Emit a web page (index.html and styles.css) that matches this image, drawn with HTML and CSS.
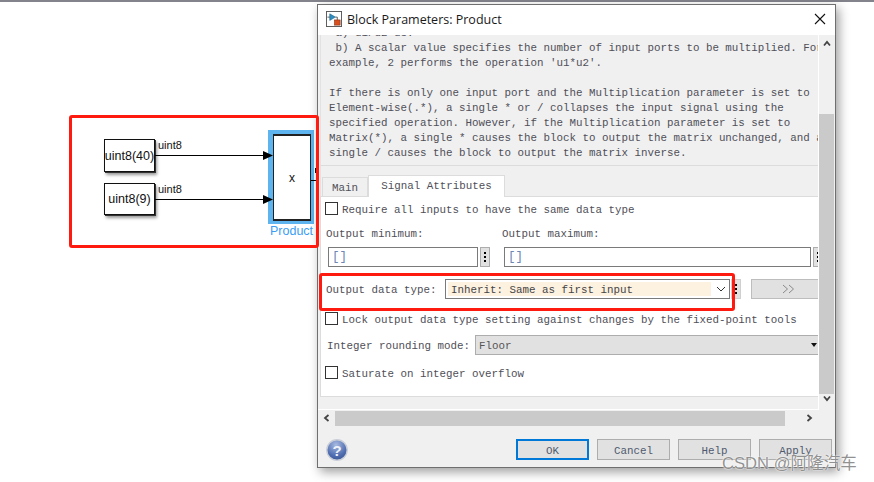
FILE: index.html
```html
<!DOCTYPE html>
<html lang="en">
<head>
<meta charset="utf-8">
<title>Block Parameters: Product</title>
<link rel="stylesheet" href="styles.css">
</head>
<body>
<div class="topbar"></div>

<div class="canvas">
  <div class="block b1">uint8(40)</div>
  <div class="block b2">uint8(9)</div>
  <div class="sig-label l1">uint8</div>
  <div class="sig-label l2">uint8</div>
  <div class="wire w1"></div>
  <div class="wire w2"></div>
  <div class="selection"><div class="product">x</div></div>
  <svg class="arrow a1" viewBox="0 0 10 9"><path d="M0 0L10 4.5L0 9Z"/></svg>
  <svg class="arrow a2" viewBox="0 0 10 9"><path d="M0 0L10 4.5L0 9Z"/></svg>
  <div class="product-label">Product</div>
  <div class="wire w3"></div>
  <div class="notch"></div>
</div>

<div class="dialog">
  <div class="titlebar">
    <svg class="app-icon" width="16" height="16" viewBox="0 0 17 17">
      <rect x="0.5" y="0.5" width="16" height="16" fill="#fff" stroke="#555"/>
      <path d="M4 3L10 6.5L4 10Z" fill="#2f8fc0" stroke="#1d5f85" stroke-width="0.6"/>
      <path d="M1.5 6.5H4M10 6.5H12V9.5" fill="none" stroke="#333" stroke-width="0.8"/>
      <rect x="9" y="9.5" width="6" height="5.5" fill="#d9501e" stroke="#7c2c10" stroke-width="0.6"/>
    </svg>
    <span class="title">Block Parameters: Product</span>
    <svg class="close" width="12" height="12" viewBox="0 0 12 12"><path d="M1 1L11 11M11 1L1 11" stroke="#111" stroke-width="1.1"/></svg>
  </div>

  <div class="client">
    <div class="viewport">
      <div class="scroll-area">
        <div class="help-pane">
          <pre class="help-text"> a) u1/u2 u3:
 b) A scalar value specifies the number of input ports to be multiplied. For
example, 2 performs the operation 'u1*u2'.

If there is only one input port and the Multiplication parameter is set to
Element-wise(.*), a single * or / collapses the input signal using the
specified operation. However, if the Multiplication parameter is set to
Matrix(*), a single * causes the block to output the matrix unchanged, and a
single / causes the block to output the matrix inverse.</pre>
        </div>

        <div class="tabs">
          <div class="tab">Main</div>
          <div class="tab active">Signal Attributes</div>
        </div>

        <div class="tab-body">
          <label class="check-row first"><span class="checkbox"></span>Require all inputs to have the same data type</label>

          <div class="minmax">
            <div class="field min">
              <div class="field-label">Output minimum:</div>
              <div class="input-row">
                <div class="input short">[]</div>
                <div class="dots"><i></i><i></i><i></i></div>
              </div>
            </div>
            <div class="field">
              <div class="field-label">Output maximum:</div>
              <div class="input-row">
                <div class="input long">[]</div>
                <div class="dots"><i></i><i></i><i></i></div>
              </div>
            </div>
          </div>

          <div class="type-row">
            <span class="type-label">Output data type:</span>
            <div class="type-select">
              <span class="type-value">Inherit: Same as first input</span>
              <svg class="chevron" width="10" height="6" viewBox="0 0 10 6"><path d="M1 1L5 5L9 1" fill="none" stroke="#333" stroke-width="1"/></svg>
            </div>
            <div class="dots plain"><i></i><i></i><i></i></div>
            <div class="assist">
              <svg width="13" height="10" viewBox="0 0 13 10"><path d="M1 1L5.5 5L1 9M7 1L11.5 5L7 9" fill="none" stroke="#8a8a8a" stroke-width="1"/></svg>
            </div>
          </div>

          <label class="check-row lock"><span class="checkbox"></span>Lock output data type setting against changes by the fixed-point tools</label>

          <div class="round-row">
            <span class="round-label">Integer rounding mode:</span>
            <div class="round-select">Floor<span class="tri"></span></div>
          </div>

          <label class="check-row sat"><span class="checkbox"></span>Saturate on integer overflow</label>
        </div>
      </div>
      <div class="hscroll">
        <svg class="sb-arrow" width="7" height="8" viewBox="0 0 7 8"><path d="M5.5 1L2 4L5.5 7" fill="none" stroke="#444" stroke-width="1.8"/></svg>
        <div class="hthumb"></div>
        <svg class="sb-arrow" width="7" height="8" viewBox="0 0 7 8"><path d="M1.5 1L5 4L1.5 7" fill="none" stroke="#444" stroke-width="1.8"/></svg>
      </div>
    </div>
    <div class="vscroll">
      <svg class="sb-arrow" width="8" height="7" viewBox="0 0 8 7"><path d="M1 5.5L4 2L7 5.5" fill="none" stroke="#444" stroke-width="1.8"/></svg>
      <div class="vtrack"><div class="vthumb"></div></div>
      <svg class="sb-arrow" width="8" height="7" viewBox="0 0 8 7"><path d="M1 1.5L4 5L7 1.5" fill="none" stroke="#444" stroke-width="1.8"/></svg>
    </div>
  </div>

  <div class="footer">
    <svg class="help-icon" width="22" height="22" viewBox="0 0 22 22">
      <defs>
        <radialGradient id="q" cx="0.45" cy="0.25" r="0.85">
          <stop offset="0" stop-color="#a9bbe0"/>
          <stop offset="0.6" stop-color="#5270b2"/>
          <stop offset="1" stop-color="#34508f"/>
        </radialGradient>
      </defs>
      <circle cx="11" cy="11" r="10.2" fill="url(#q)" stroke="#c9ced8" stroke-width="1.4"/>
      <text x="11" y="16.5" text-anchor="middle" class="q-mark">?</text>
    </svg>
    <div class="buttons">
      <div class="btn default">OK</div>
      <div class="btn">Cancel</div>
      <div class="btn">Help</div>
      <div class="btn">Apply</div>
    </div>
  </div>
</div>

<div class="red r1"></div>
<div class="red r2"></div>
<div class="watermark">CSDN @阿隆汽车</div>
</body>
</html>
```
FILE: styles.css
```css
* { box-sizing: border-box; }
html, body { margin: 0; padding: 0; }
body {
  width: 874px;
  height: 482px;
  background: #fff;
  overflow: hidden;
  position: relative;
  font-family: "Liberation Mono", monospace;
}
.topbar { height: 2px; background: #83838b; }

/* Simulink canvas */
.canvas { position: absolute; inset: 0; font-family: "Liberation Sans", Arial, sans-serif; color: #111; }
.block {
  position: absolute;
  left: 104px;
  width: 51px;
  background: #fff;
  border: 1px solid #111;
  box-shadow: 1px 1px 0 #333, 2px 3px 3px #999;
  display: flex;
  align-items: center;
  justify-content: center;
  font-size: 12.5px;
  white-space: nowrap;
}
.b1 { top: 139px; height: 33px; }
.b2 { top: 183px; height: 32px; }
.sig-label { position: absolute; left: 158px; font-size: 11px; line-height: 12px; }
.l1 { top: 139px; }
.l2 { top: 183px; }
.wire { position: absolute; height: 1px; background: #000; }
.w1 { left: 155px; top: 155px; width: 110px; }
.w2 { left: 155px; top: 199px; width: 110px; }
.w3 { left: 311px; top: 180px; width: 6px; }
.notch { position: absolute; left: 315px; top: 168px; width: 3px; height: 5px; background: #111; }
.arrow { position: absolute; width: 10px; height: 9px; left: 263px; }
.arrow path { fill: #000; }
.a1 { top: 151px; }
.a2 { top: 195px; }
.selection {
  position: absolute;
  left: 268px;
  top: 130px;
  width: 46px;
  height: 94px;
  background: #5eb4ef;
  padding: 4px 3px 3px 5px;
}
.product {
  height: 100%;
  background: #fff;
  border: 1px solid #222;
  border-top-width: 2px;
  border-bottom-width: 2px;
  display: flex;
  align-items: center;
  justify-content: center;
  font-size: 12px;
}
.product-label { position: absolute; left: 270px; top: 224px; font-size: 12.5px; line-height: 14px; color: #3a9df3; }

/* Dialog window */
.dialog {
  position: absolute;
  left: 317px;
  top: 4px;
  width: 519px;
  height: 464px;
  background: #f0f0f0;
  border: 1px solid #6f6f6f;
  box-shadow: 3px 4px 10px rgba(0,0,0,0.38);
  display: flex;
  flex-direction: column;
}
.titlebar {
  height: 30px;
  background: #fff;
  display: flex;
  align-items: center;
  padding: 0 9px 2px 8px;
  flex: none;
}
.app-icon { flex: none; }
.title {
  font-family: "Open Sans", "Noto Sans", sans-serif;
  font-size: 12.5px;
  color: #1a1a1a;
  margin-left: 5px;
  flex: 1;
}
.close { flex: none; }

.client { display: flex; height: 391px; flex: none; }
.viewport { width: 501px; display: flex; flex-direction: column; flex: none; }
.scroll-area {
  height: 375px;
  overflow: hidden;
  flex: none;
  padding-left: 2px;
  border-bottom: 1px solid #fff;
  border-right: 1px solid #fff;
}
.help-pane {
  height: 131px;
  overflow: hidden;
  padding-left: 8px;
  border-bottom: 1px solid #dcdcdc;
  border-left: 1px solid #e2e2e2;
}
.help-text {
  margin: -9px 0 0;
  font-family: "Liberation Mono", monospace;
  font-size: 10.83px;
  line-height: 15px;
  color: #4f4f58;
}
.tabs {
  height: 30px;
  display: flex;
  align-items: flex-end;
  padding-left: 1px;
  font-size: 10.83px;
  color: #4f4f58;
  border-left: 1px solid #e2e2e2;
  width: 1000px;
}
.tab {
  height: 19px;
  width: 46px;
  border: 1px solid #dcdcdc;
  border-bottom: none;
  background: #f0f0f0;
  text-align: center;
  line-height: 20px;
}
.tab.active {
  height: 22px;
  width: 137px;
  background: #fff;
  line-height: 20px;
  position: relative;
  top: 1px;
}
.tab-body {
  width: 512px;
  height: 201px;
  background: #fff;
  border: 1px solid #dcdcdc;
  padding-left: 4px;
  font-size: 10.83px;
  color: #4f4f58;
  white-space: nowrap;
}
.check-row { display: flex; align-items: center; height: 13px; padding-top: 2px; }
.checkbox { width: 13px; height: 13px; border: 1px solid #333; background: #fff; margin: -2px 4px 0 0; align-self: flex-start; flex: none; }
.first { margin-top: 5px; }
.minmax { display: flex; margin-top: 12px; padding-left: 1px; }
.field.min { width: 176px; flex: none; }
.field-label { line-height: 15px; height: 13px; }
.input-row { display: flex; margin-top: 7px; margin-left: 2px; gap: 2px; }
.input {
  height: 20px;
  border: 1px solid #7a7a7a;
  background: #fff;
  padding-left: 3px;
  line-height: 18px;
  color: #6a87b5;
  font-size: 12.5px;
}
.input.short { width: 150px; }
.input.long { width: 307px; }
.dots {
  width: 10px;
  height: 20px;
  background: #e1e1e1;
  border: 1px solid #adadad;
  display: flex;
  flex-direction: column;
  align-items: center;
  justify-content: center;
  gap: 2px;
  flex: none;
}
.dots i { width: 2px; height: 2px; background: #000; display: block; }
.dots.plain { border-color: #cfcfcf; margin-left: 1px; }
.type-row { display: flex; align-items: center; margin-top: 12px; height: 20px; }
.type-label { width: 120px; flex: none; padding: 2px 0 0 1px; }
.type-select {
  width: 285px;
  height: 20px;
  border: 1px solid #7a7a7a;
  background: #fff;
  display: flex;
  align-items: center;
  padding: 2px;
  flex: none;
}
.type-value {
  width: 263px;
  height: 14px;
  background: #fdf1e0;
  line-height: 16px;
  padding-left: 3px;
  color: #444;
}
.chevron { margin-left: 5px; }
.assist {
  width: 74px;
  height: 20px;
  margin-left: 10px;
  background: #e1e1e1;
  border: 1px solid #bdbdbd;
  display: flex;
  align-items: center;
  justify-content: center;
  flex: none;
}
.lock { margin-top: 13px; }
.round-row { display: flex; align-items: center; margin-top: 10px; height: 20px; }
.round-label { width: 150px; flex: none; padding: 2px 0 0 2px; }
.round-select {
  width: 360px;
  height: 20px;
  background: #e1e1e1;
  border: 1px solid #adadad;
  padding-left: 3px;
  line-height: 21px;
  flex: none;
  position: relative;
  color: #555;
}
.tri {
  position: absolute;
  left: 335px;
  top: 7px;
  width: 0;
  height: 0;
  border-left: 3.5px solid transparent;
  border-right: 3.5px solid transparent;
  border-top: 4px solid #111;
}
.sat { margin-top: 11px; }

.hscroll {
  height: 16px;
  display: flex;
  align-items: center;
  padding-left: 5px;
  background: #f0f0f0;
}
.hthumb { width: 450px; height: 15px; background: #cacaca; margin-left: 5px; margin-right: 21px; }
.vscroll {
  width: 16px;
  display: flex;
  flex-direction: column;
  align-items: center;
  padding-top: 5px;
  padding-right: 1px;
  height: 367px;
}
.vtrack { height: 348px; width: 15px; padding-top: 66px; margin-top: 1px; }
.vthumb { height: 280px; background: #cacaca; width: 15px; }
.sb-arrow { flex: none; display: block; }

.footer {
  height: 41px;
  display: flex;
  align-items: flex-start;
  justify-content: space-between;
  padding: 13px 3px 0 8px;
  flex: none;
}
.help-icon { flex: none; }
.q-mark { font-family: "Liberation Sans", sans-serif; font-size: 15px; font-weight: bold; fill: #eef2fa; }
.buttons { display: flex; gap: 8px; }
.btn {
  width: 73px;
  height: 21px;
  background: #e1e1e1;
  border: 1px solid #adadad;
  text-align: center;
  font-size: 10.83px;
  line-height: 22px;
  color: #4f5a6e;
}
.btn.default { border: 2px solid #0078d7; line-height: 20px; }

/* Annotations */
.red { position: absolute; border: 3px solid #ff1a10; border-radius: 3px; }
.r1 { left: 69px; top: 115px; width: 250px; height: 133px; }
.r2 { left: 319px; top: 273px; width: 416px; height: 38px; }
.watermark {
  position: absolute;
  left: 722px;
  top: 455px;
  font-family: "Liberation Sans", "Noto Sans CJK SC", sans-serif;
  font-size: 16.6px;
  line-height: 18px;
  color: rgba(125,125,125,0.85);
  text-shadow: 0 0 2px #fff, 0 0 1px #fff;
  white-space: nowrap;
}
```
